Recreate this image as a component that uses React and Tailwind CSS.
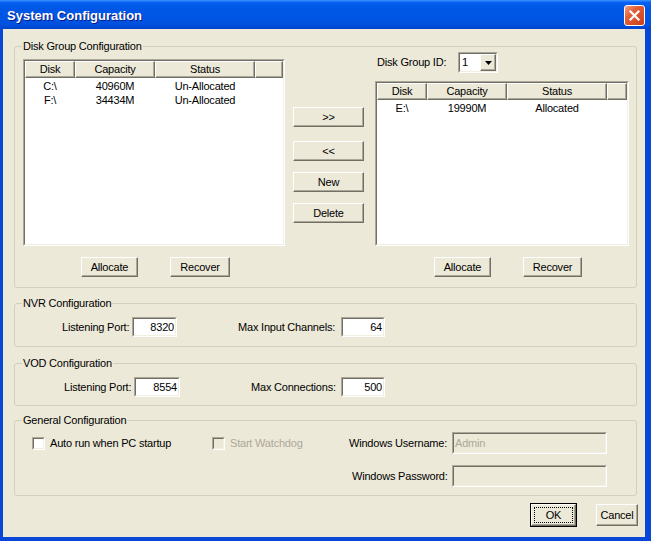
import React from 'react';

const LEFT_DISKS = [
  { disk: 'C:\\', cap: '40960M', status: 'Un-Allocated' },
  { disk: 'F:\\', cap: '34434M', status: 'Un-Allocated' },
];
const RIGHT_DISKS = [{ disk: 'E:\\', cap: '19990M', status: 'Allocated' }];

const BTN =
  'flex items-center justify-center bg-[#ece9d8] border border-t-white border-l-white border-r-[#716f64] border-b-[#716f64] shadow-[inset_-1px_-1px_0_#aca899] text-black';
const HEAD =
  'flex items-center justify-center h-full bg-[#ece9d8] border border-t-white border-l-white border-r-[#716f64] border-b-[#716f64] shadow-[inset_-1px_-1px_0_#aca899]';

// 2px sunken frame (classic look)
function Sunken({ className, inner, children }) {
  return (
    <div className={`border border-t-[#aca899] border-l-[#aca899] border-b-white border-r-white ${className}`}>
      <div className={`h-full border border-t-[#716f64] border-l-[#716f64] border-b-[#f1efe2] border-r-[#f1efe2] ${inner}`}>
        {children}
      </div>
    </div>
  );
}

function Field({ className, value }) {
  return (
    <Sunken className={className} inner="bg-white flex items-center justify-end pr-[1px]">
      {value}
    </Sunken>
  );
}

function Check({ disabled }) {
  return (
    <Sunken className="w-[13px] h-[13px] flex-none" inner={disabled ? 'bg-[#ece9d8]' : 'bg-white'} />
  );
}

function ListView({ className, rows }) {
  return (
    <Sunken className={className} inner="bg-white flex flex-col">
      <div className="flex h-[17px] flex-none">
        <div className={`${HEAD} w-[50px]`}>Disk</div>
        <div className={`${HEAD} w-[80px]`}>Capacity</div>
        <div className={`${HEAD} w-[100px]`}>Status</div>
        <div className={`${HEAD} flex-1`} />
      </div>
      <div className="pt-[1px]">
        {rows.map((r) => (
          <div key={r.disk} className="flex h-[14px] items-center">
            <div className="w-[50px] text-center">{r.disk}</div>
            <div className="w-[80px] text-center">{r.cap}</div>
            <div className="w-[100px] text-center">{r.status}</div>
          </div>
        ))}
      </div>
    </Sunken>
  );
}

function Group({ title, className, children }) {
  return (
    <fieldset className={`ml-[11px] w-[623px] border border-[#d0d0bf] rounded-[3px] ${className}`}>
      <legend className="ml-[7px] px-[1px] leading-[13px]">{title}</legend>
      {children}
    </fieldset>
  );
}

export default function App() {
  return (
    <div className="w-[651px] h-[541px] flex flex-col bg-[#0847d8] font-['Liberation_Sans',Arial,sans-serif] text-[11px] tracking-[-0.2px] text-black overflow-hidden">
      {/* title bar */}
      <div className="h-[29px] flex-none flex items-start bg-[linear-gradient(to_bottom,#3d95ff_0%,#0a62f4_8%,#0058e6_22%,#0055e5_60%,#0051dd_85%,#0043cc_100%)]">
        <div className="pl-[7px] pt-[8px] text-[13px] leading-[15px] font-bold tracking-normal text-white [text-shadow:1px_1px_0_#0a1883]">
          System Configuration
        </div>
        <div className="ml-auto mr-[6px] mt-[5px] w-[21px] h-[21px] rounded-[3px] border border-white bg-[linear-gradient(135deg,#f0a080_0%,#e2603a_35%,#cc3e18_100%)] flex items-center justify-center">
          <svg width="13" height="13" viewBox="0 0 13 13">
            <path d="M2.5 2.5L10.5 10.5M10.5 2.5L2.5 10.5" stroke="white" strokeWidth="2.2" strokeLinecap="square" />
          </svg>
        </div>
      </div>

      <div className="flex-1 pl-[3px] pr-[6px] pb-[4px]">
        <div className="h-[508px] bg-[#ece9d8] flex flex-col">
          {/* Disk group */}
          <Group title="Disk Group Configuration" className="mt-[11px]">
            <div className="flex items-start pl-[8px] pt-[6px] pb-[10px]">
              <div className="flex flex-col">
                <ListView className="w-[262px] h-[187px]" rows={LEFT_DISKS} />
                <div className="flex mt-[11px] ml-[58px] gap-[32px]">
                  <div className={`${BTN} w-[57px] h-[20px]`}>Allocate</div>
                  <div className={`${BTN} w-[60px] h-[20px]`}>Recover</div>
                </div>
              </div>

              <div className="ml-[8px] w-[71px] flex flex-col pt-[48px]">
                <div className={`${BTN} h-[20px]`}>&gt;&gt;</div>
                <div className={`${BTN} h-[20px] mt-[14px]`}>&lt;&lt;</div>
                <div className={`${BTN} h-[20px] mt-[11px]`}>New</div>
                <div className={`${BTN} h-[20px] mt-[11px]`}>Delete</div>
              </div>

              <div className="ml-[11px] flex flex-col -mt-[7px]">
                <div className="flex items-center h-[21px] pl-[2px]">
                  <div className="w-[81px]">Disk Group ID:</div>
                  <Sunken className="w-[40px] h-[21px]" inner="bg-white flex items-center">
                    <div className="flex-1 pl-[2px]">1</div>
                    <div className={`${BTN} w-[16px] h-full`}>
                      <svg width="7" height="4" viewBox="0 0 7 4">
                        <path d="M0 0H7L3.5 4Z" fill="black" />
                      </svg>
                    </div>
                  </Sunken>
                </div>
                <ListView className="w-[254px] h-[165px] mt-[8px]" rows={RIGHT_DISKS} />
                <div className="flex mt-[11px] ml-[59px] gap-[32px]">
                  <div className={`${BTN} w-[57px] h-[20px]`}>Allocate</div>
                  <div className={`${BTN} w-[59px] h-[20px]`}>Recover</div>
                </div>
              </div>
            </div>
          </Group>

          {/* NVR */}
          <Group title="NVR Configuration" className="mt-[9px]">
            <div className="flex items-center pt-[7px] pb-[9px]">
              <div className="ml-[47px] w-[70px]">Listening Port:</div>
              <Field className="w-[45px] h-[20px]" value="8320" />
              <div className="ml-[61px] w-[103px]">Max Input Channels:</div>
              <Field className="w-[44px] h-[20px]" value="64" />
            </div>
          </Group>

          {/* VOD */}
          <Group title="VOD Configuration" className="mt-[10px]">
            <div className="flex items-center pt-[7px] pb-[8px]">
              <div className="ml-[49px] w-[70px]">Listening Port:</div>
              <Field className="w-[46px] h-[20px]" value="8554" />
              <div className="ml-[71px] w-[90px]">Max Connections:</div>
              <Field className="w-[44px] h-[20px]" value="500" />
            </div>
          </Group>

          {/* General */}
          <Group title="General Configuration" className="mt-[8px]">
            <div className="flex flex-col pt-[5px] pb-[8px]">
              <div className="flex items-center h-[22px]">
                <div className="ml-[17px]">
                  <Check />
                </div>
                <div className="w-[167px] pl-[5px]">Auto run when PC startup</div>
                <Check disabled />
                <div className="w-[124px] pl-[5px] text-[#aca899]">Start Watchdog</div>
                <div className="w-[103px]">Windows Username:</div>
                <Sunken className="w-[155px] h-[22px]" inner="bg-[#ece9d8] flex items-center pl-[1px] text-[#aca899]">
                  Admin
                </Sunken>
              </div>
              <div className="flex items-center h-[22px] mt-[11px]">
                <div className="ml-[337px] w-[100px]">Windows Password:</div>
                <Sunken className="w-[155px] h-[22px]" inner="bg-[#ece9d8]" />
              </div>
            </div>
          </Group>

          {/* OK / Cancel */}
          <div className="flex justify-end items-start mt-[7px] pr-[7px] gap-[19px]">
            <div className="w-[47px] h-[24px] border border-black flex">
              <div className={`${BTN} flex-1`}>
                <div className="flex-1 self-stretch m-[2px] border border-dotted border-black flex items-center justify-center">
                  OK
                </div>
              </div>
            </div>
            <div className={`${BTN} w-[42px] h-[22px] mt-[1px]`}>Cancel</div>
          </div>
        </div>
      </div>
    </div>
  );
}
